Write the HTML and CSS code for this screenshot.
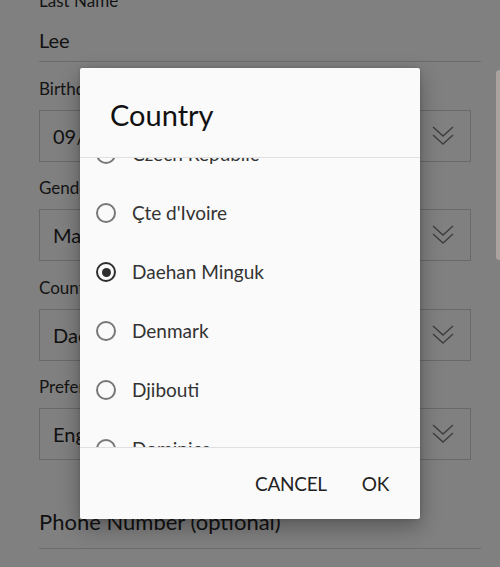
FILE: index.html
```html
<!DOCTYPE html>
<html>
<head>
<meta charset="utf-8">
<link rel="stylesheet" href="styles.css">
</head>
<body>
<div class="screen">
  <div class="form">
    <div class="label label-top">Last Name</div>
    <div class="text-input">Lee</div>

    <div class="field">
      <div class="label">Birthdate</div>
      <div class="select"><span class="value">09/12/1985</span><svg class="chev" viewBox="0 0 24 22"><path d="M2 2 L12 11 L22 2 M2 10 L12 19 L22 10"/></svg></div>
    </div>
    <div class="field">
      <div class="label">Gender</div>
      <div class="select"><span class="value">Male</span><svg class="chev" viewBox="0 0 24 22"><path d="M2 2 L12 11 L22 2 M2 10 L12 19 L22 10"/></svg></div>
    </div>
    <div class="field">
      <div class="label">Country</div>
      <div class="select"><span class="value">Daehan Minguk</span><svg class="chev" viewBox="0 0 24 22"><path d="M2 2 L12 11 L22 2 M2 10 L12 19 L22 10"/></svg></div>
    </div>
    <div class="field">
      <div class="label">Preferred Language</div>
      <div class="select"><span class="value">English</span><svg class="chev" viewBox="0 0 24 22"><path d="M2 2 L12 11 L22 2 M2 10 L12 19 L22 10"/></svg></div>
    </div>

    <div class="text-input phone">Phone Number (optional)</div>
  </div>

  <div class="scrollbar"></div>

  <div class="dialog">
    <div class="dialog-title">Country</div>
    <div class="dialog-list">
      <div class="list-inner">
        <div class="item"><span class="radio"></span><span class="item-text">Czech Republic</span></div>
        <div class="item"><span class="radio"></span><span class="item-text">Çte d'Ivoire</span></div>
        <div class="item"><span class="radio checked"></span><span class="item-text">Daehan Minguk</span></div>
        <div class="item"><span class="radio"></span><span class="item-text">Denmark</span></div>
        <div class="item"><span class="radio"></span><span class="item-text">Djibouti</span></div>
        <div class="item"><span class="radio"></span><span class="item-text">Dominica</span></div>
      </div>
    </div>
    <div class="dialog-actions">
      <span class="btn">CANCEL</span>
      <span class="btn">OK</span>
    </div>
  </div>
</div>
</body>
</html>
```

FILE: styles.css
```css
html, body {
  margin: 0;
  padding: 0;
}
body {
  width: 500px;
  height: 567px;
  overflow: hidden;
  background: #808080;
  font-family: Lato, "Open Sans", sans-serif;
}
.screen {
  position: relative;
  width: 500px;
  height: 567px;
  overflow: hidden;
  background: #808080;
}
.form {
  display: flex;
  flex-direction: column;
  padding: 0 29px 0 39px;
  margin-top: -9px;
}
.label {
  font-size: 17px;
  line-height: 20px;
  height: 20px;
  color: #141414;
  white-space: nowrap;
}
.label-top {
  margin-bottom: 17px;
}
.text-input {
  font-size: 20px;
  line-height: 24px;
  color: #111;
  padding-bottom: 9px;
  border-bottom: 1.5px solid #6c6c6c;
  margin-right: -10px;
}
.field {
  display: flex;
  flex-direction: column;
  margin-top: 16.5px;
}
.field:first-of-type {
  margin-top: 17.5px;
}
.field .label {
  margin-bottom: 11px;
}
.select {
  box-sizing: border-box;
  height: 52px;
  border: 1.5px solid #696969;
  display: flex;
  align-items: center;
  justify-content: space-between;
  padding: 0 15px 0 13px;
}
.value {
  font-size: 20px;
  line-height: 24px;
  color: #111;
}
.chev {
  width: 24px;
  height: 22px;
  fill: none;
  stroke: #3e3e3e;
  stroke-width: 1.4;
}
.phone {
  margin-top: 49px;
  font-size: 22px;
  line-height: 26px;
  padding-bottom: 12.5px;
}
.scrollbar {
  position: absolute;
  left: 496px;
  top: 70px;
  width: 7px;
  height: 190px;
  border-radius: 4px;
  background: #aaa29f;
}
.dialog {
  position: absolute;
  left: 80px;
  top: 68px;
  width: 340px;
  height: 451px;
  background: #fafafa;
  border-radius: 2px;
  box-shadow: 0 8px 22px rgba(0,0,0,0.32), 0 0 4px rgba(0,0,0,0.15);
  display: flex;
  flex-direction: column;
  overflow: hidden;
}
.dialog-title {
  padding: 29px 0 24px 30px;
  font-size: 29px;
  line-height: 36px;
  color: #111;
  border-bottom: 1px solid #e0e0e0;
}
.dialog-list {
  flex: 1;
  overflow: hidden;
}
.list-inner {
  margin-top: -33.5px;
}
.item {
  height: 59px;
  display: flex;
  align-items: center;
  padding-left: 16px;
}
.radio {
  box-sizing: border-box;
  width: 20px;
  height: 20px;
  border-radius: 50%;
  border: 2px solid #777;
  margin-right: 16px;
  flex: none;
  display: flex;
  align-items: center;
  justify-content: center;
}
.radio.checked {
  border: 2.5px solid #2e2e2e;
}
.radio.checked::after {
  content: "";
  width: 9px;
  height: 9px;
  border-radius: 50%;
  background: #2e2e2e;
}
.item-text {
  font-size: 19px;
  line-height: 24px;
  color: #333;
}
.dialog-actions {
  height: 71px;
  border-top: 1px solid #e0e0e0;
  display: flex;
  justify-content: flex-end;
  align-items: center;
  gap: 35px;
  padding-right: 31px;
}
.btn {
  font-size: 19px;
  line-height: 24px;
  letter-spacing: -0.3px;
  color: #222;
}
```
